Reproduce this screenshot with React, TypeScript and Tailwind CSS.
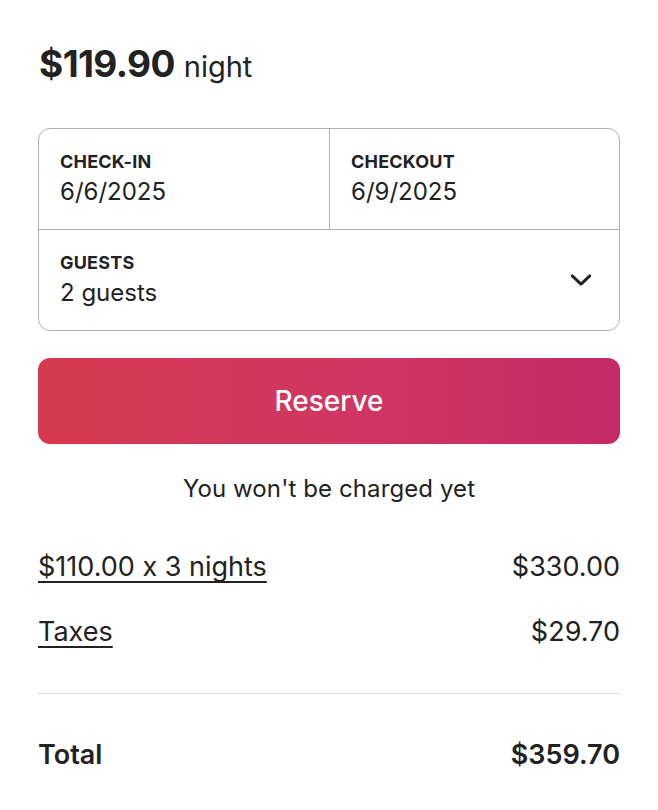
import React from "react";

export default function App() {
  return (
    <div
      className="min-h-[810px] w-full bg-white text-[#222222]"
      style={{ fontFamily: "Inter, 'Noto Sans', sans-serif", fontFeatureSettings: "'calt' 0" }}
    >
      <div className="px-[38px] pt-[40px]">
        <div className="flex items-baseline gap-[9px] pl-[1px]">
          <span className="text-[37px] font-bold leading-[48px] tracking-[-0.6px]">$119.90</span>
          <span className="text-[29px] leading-[48px]">night</span>
        </div>

        <div className="mt-[37px] rounded-[12px] border border-[#b0b0b0]">
          <div className="flex h-[101px] border-b border-[#b0b0b0]">
            <div className="flex w-[291px] flex-col justify-center border-r border-[#b0b0b0] px-[21px]">
              <div className="text-[18px] font-bold leading-[20px] tracking-[0.2px]">CHECK-IN</div>
              <div className="mt-[5px] text-[24px] leading-[30px]">6/6/2025</div>
            </div>
            <div className="flex flex-1 flex-col justify-center px-[21px]">
              <div className="text-[18px] font-bold leading-[20px] tracking-[0.2px]">CHECKOUT</div>
              <div className="mt-[5px] text-[24px] leading-[30px]">6/9/2025</div>
            </div>
          </div>
          <div className="flex h-[100px] items-center justify-between px-[21px]">
            <div className="flex flex-col">
              <div className="text-[18px] font-bold leading-[20px] tracking-[0.2px]">GUESTS</div>
              <div className="mt-[5px] text-[24px] leading-[30px]">2 guests</div>
            </div>
            <svg width="28" height="28" viewBox="0 0 24 24" fill="none" stroke="#222222" strokeWidth="2.5" strokeLinecap="round" strokeLinejoin="round" className="mr-[3px]">
              <path d="M4.5 8.5l7.5 7 7.5-7" />
            </svg>
          </div>
        </div>

        <button className="mt-[27px] flex h-[86px] w-full items-center justify-center rounded-[12px] bg-gradient-to-r from-[#d63a50] via-[#d03760] to-[#c42a66] text-[28px] font-medium text-white">
          Reserve
        </button>

        <div className="mt-[29px] text-center text-[24px] leading-[32px] tracking-[0.1px]">You won't be charged yet</div>

        <div className="mt-[44px] flex items-center justify-between">
          <span className="text-[27px] leading-[36px] underline underline-offset-[5px] decoration-[1.5px] [text-decoration-skip-ink:none]">$110.00 x 3 nights</span>
          <span className="text-[27px] leading-[36px]">$330.00</span>
        </div>
        <div className="mt-[29px] flex items-center justify-between">
          <span className="text-[27px] leading-[36px] underline underline-offset-[5px] decoration-[1.5px] [text-decoration-skip-ink:none]">Taxes</span>
          <span className="text-[27px] leading-[36px]">$29.70</span>
        </div>

        <div className="mt-[43px] border-t border-[#dddddd]" />

        <div className="mt-[43px] flex items-center justify-between">
          <span className="text-[27px] font-semibold leading-[36px]">Total</span>
          <span className="text-[27px] font-semibold leading-[36px]">$359.70</span>
        </div>
      </div>
    </div>
  );
}
